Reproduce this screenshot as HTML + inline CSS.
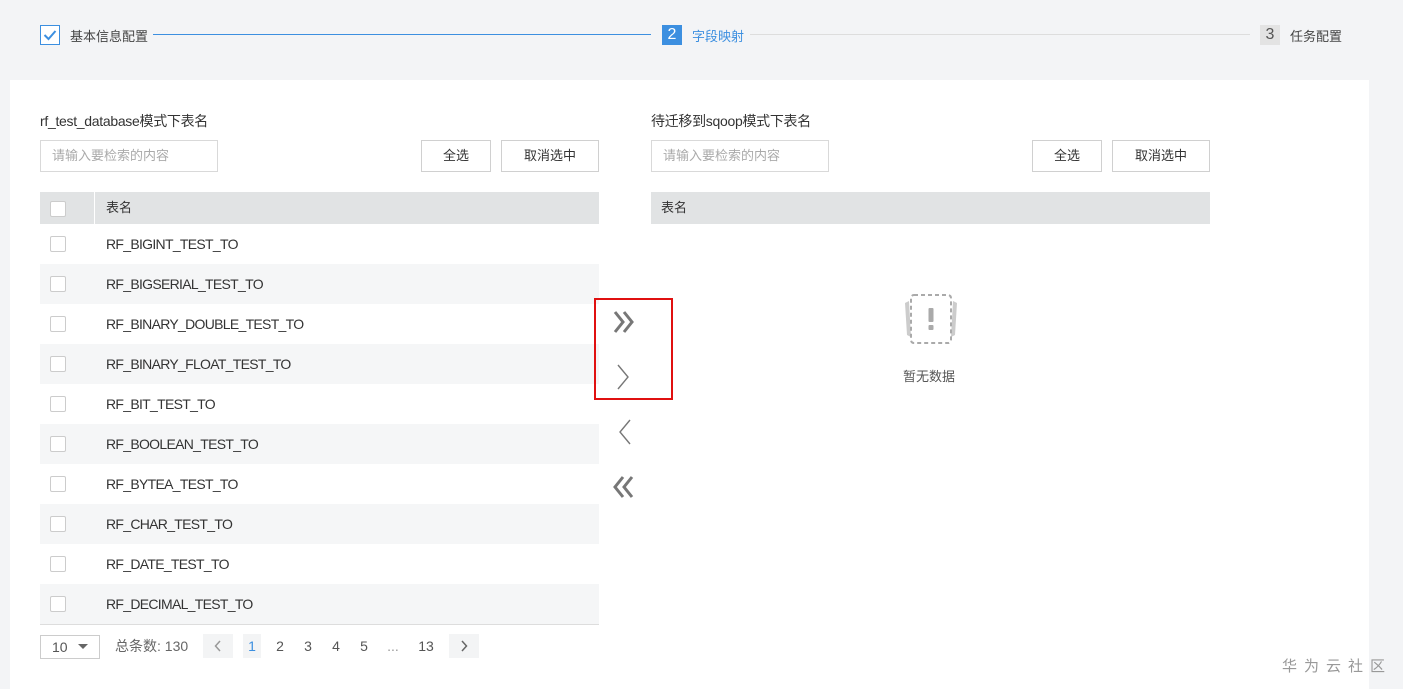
<!DOCTYPE html>
<html><head><meta charset="utf-8"><style>
*{box-sizing:border-box;margin:0;padding:0}
body{width:1403px;height:689px;background:#f3f4f6;font-family:"Liberation Sans","Noto Sans CJK SC",sans-serif;color:#333;position:relative;overflow:hidden;font-size:13px}
.a{position:absolute}
.panel{left:10px;top:80px;width:1359px;height:609px;background:#fff}
.inp{height:32px;border:1px solid #d9d9d9;color:#aaa;padding-left:11px;line-height:30px;font-size:13px;width:178px}
.btn{height:32px;border:1px solid #d0d0d0;text-align:center;line-height:30px;font-size:13px;color:#333;background:#fff}
.hdr{height:32px;background:#e1e3e4;line-height:32px;font-size:13px}
.cb{width:16px;height:16px;border:1px solid #ccc;background:#fff;border-radius:2px}
.row{left:40px;width:559px;height:40px;line-height:40px;font-size:14px;letter-spacing:-0.7px;color:#333}
.row .cb{position:absolute;left:10px;top:12px}
.row span{position:absolute;left:66px}
.g{background:#f5f6f7}
.pg{top:634px;height:24px;line-height:24px;font-size:14px;color:#555;text-align:center}
</style></head><body>
<div class="a" style="left:40px;top:25px;width:20px;height:20px;border:1px solid #3c8fe0;background:#fff"></div>
<svg class="a" style="left:43px;top:29px" width="14" height="12"><path d="M1.5 6 L5.5 10 L12.5 2" stroke="#3c8fe0" stroke-width="2" fill="none"/></svg>
<div class="a" style="left:70px;top:26px;font-size:13px;color:#444">基本信息配置</div>
<div class="a" style="left:153px;top:34px;width:498px;height:1px;background:#3c8fe0"></div>
<div class="a" style="left:662px;top:25px;width:20px;height:20px;background:#3c8fe0;color:#fff;text-align:center;line-height:20px;font-size:16px">2</div>
<div class="a" style="left:692px;top:26px;font-size:13px;color:#3c8fe0">字段映射</div>
<div class="a" style="left:750px;top:34px;width:500px;height:1px;background:#ddd"></div>
<div class="a" style="left:1260px;top:25px;width:20px;height:20px;background:#e3e3e3;color:#555;text-align:center;line-height:20px;font-size:16px">3</div>
<div class="a" style="left:1290px;top:26px;font-size:13px;color:#444">任务配置</div>

<div class="a panel"></div>
<div class="a" style="left:40px;top:111px;font-size:14px;color:#333;letter-spacing:-0.3px">rf_test_database模式下表名</div>
<div class="a inp" style="left:40px;top:140px">请输入要检索的内容</div>
<div class="a btn" style="left:421px;top:140px;width:70px">全选</div>
<div class="a btn" style="left:501px;top:140px;width:98px">取消选中</div>
<div class="a hdr" style="left:40px;top:192px;width:559px"></div>
<div class="a" style="left:94px;top:192px;width:1px;height:32px;background:#fff"></div>
<div class="a cb" style="left:50px;top:201px"></div>
<div class="a" style="left:106px;top:192px;line-height:32px">表名</div>
<div class="a row" style="top:224px"><div class="cb"></div><span>RF_BIGINT_TEST_TO</span></div>
<div class="a row g" style="top:264px"><div class="cb"></div><span>RF_BIGSERIAL_TEST_TO</span></div>
<div class="a row" style="top:304px"><div class="cb"></div><span>RF_BINARY_DOUBLE_TEST_TO</span></div>
<div class="a row g" style="top:344px"><div class="cb"></div><span>RF_BINARY_FLOAT_TEST_TO</span></div>
<div class="a row" style="top:384px"><div class="cb"></div><span>RF_BIT_TEST_TO</span></div>
<div class="a row g" style="top:424px"><div class="cb"></div><span>RF_BOOLEAN_TEST_TO</span></div>
<div class="a row" style="top:464px"><div class="cb"></div><span>RF_BYTEA_TEST_TO</span></div>
<div class="a row g" style="top:504px"><div class="cb"></div><span>RF_CHAR_TEST_TO</span></div>
<div class="a row" style="top:544px"><div class="cb"></div><span>RF_DATE_TEST_TO</span></div>
<div class="a row g" style="top:584px"><div class="cb"></div><span>RF_DECIMAL_TEST_TO</span></div>
<div class="a" style="left:40px;top:624px;width:559px;height:1px;background:#ddd"></div>
<div class="a" style="left:40px;top:635px;width:60px;height:24px;border:1px solid #ccc;font-size:14px;line-height:22px;padding-left:11px;color:#555">10</div>
<svg class="a" style="left:78px;top:644px" width="10" height="6"><path d="M0 0H10L5 5Z" fill="#666"/></svg>
<div class="a" style="left:115px;top:634px;line-height:24px;font-size:14px;color:#666">总条数: 130</div>
<div class="a pg" style="left:203px;width:30px;background:#f3f4f5"><svg width="8" height="12" style="margin-top:6px"><path d="M6 1L1.5 6L6 11" stroke="#999" stroke-width="1.5" fill="none"/></svg></div>
<div class="a pg" style="left:243px;width:18px;background:#f3f4f5;color:#3c8fe0">1</div>
<div class="a pg" style="left:271px;width:18px">2</div>
<div class="a pg" style="left:299px;width:18px">3</div>
<div class="a pg" style="left:327px;width:18px">4</div>
<div class="a pg" style="left:355px;width:18px">5</div>
<div class="a pg" style="left:383px;width:20px;color:#999">...</div>
<div class="a pg" style="left:413px;width:26px">13</div>
<div class="a pg" style="left:449px;width:30px;background:#f3f4f5"><svg width="8" height="12" style="margin-top:6px"><path d="M2 1L6.5 6L2 11" stroke="#666" stroke-width="1.5" fill="none"/></svg></div>

<div class="a" style="left:594px;top:298px;width:79px;height:102px;border:2px solid #e01010"></div>
<svg class="a" style="left:611px;top:309px" width="28" height="26"><path d="M4 3L12 13L4 23M13 3L21 13L13 23" stroke="#777" stroke-width="3" fill="none"/></svg>
<svg class="a" style="left:615px;top:364px" width="20" height="26"><path d="M3 1L13 13L3 25" stroke="#777" stroke-width="1.4" fill="none"/></svg>
<svg class="a" style="left:615px;top:419px" width="20" height="26"><path d="M15 1L5 13L15 25" stroke="#777" stroke-width="1.4" fill="none"/></svg>
<svg class="a" style="left:611px;top:474px" width="28" height="26"><path d="M12 3L4 13L12 23M21 3L13 13L21 23" stroke="#777" stroke-width="3" fill="none"/></svg>

<div class="a" style="left:651px;top:111px;font-size:14px;color:#333;letter-spacing:-0.3px">待迁移到sqoop模式下表名</div>
<div class="a inp" style="left:651px;top:140px">请输入要检索的内容</div>
<div class="a btn" style="left:1032px;top:140px;width:70px">全选</div>
<div class="a btn" style="left:1112px;top:140px;width:98px">取消选中</div>
<div class="a hdr" style="left:651px;top:192px;width:559px;padding-left:10px">表名</div>
<svg class="a" style="left:903px;top:293px" width="56" height="52">
<path d="M6 8L2 10L4 42L8 44Z M50 8L54 10L52 42L48 44Z" fill="#ccc"/>
<rect x="8" y="2" width="40" height="48" rx="3" fill="#fff" stroke="#aaa" stroke-width="2" stroke-dasharray="4 3"/>
<rect x="25.5" y="15" width="5" height="14" rx="1" fill="#aaa"/><rect x="25.5" y="32" width="5" height="5" rx="1" fill="#aaa"/>
</svg>
<div class="a" style="left:903px;top:366px;font-size:13px;color:#555">暂无数据</div>

<div class="a" style="left:1282px;top:655px;font-size:15px;color:#999;letter-spacing:7px">华为云社区</div>
</body></html>
